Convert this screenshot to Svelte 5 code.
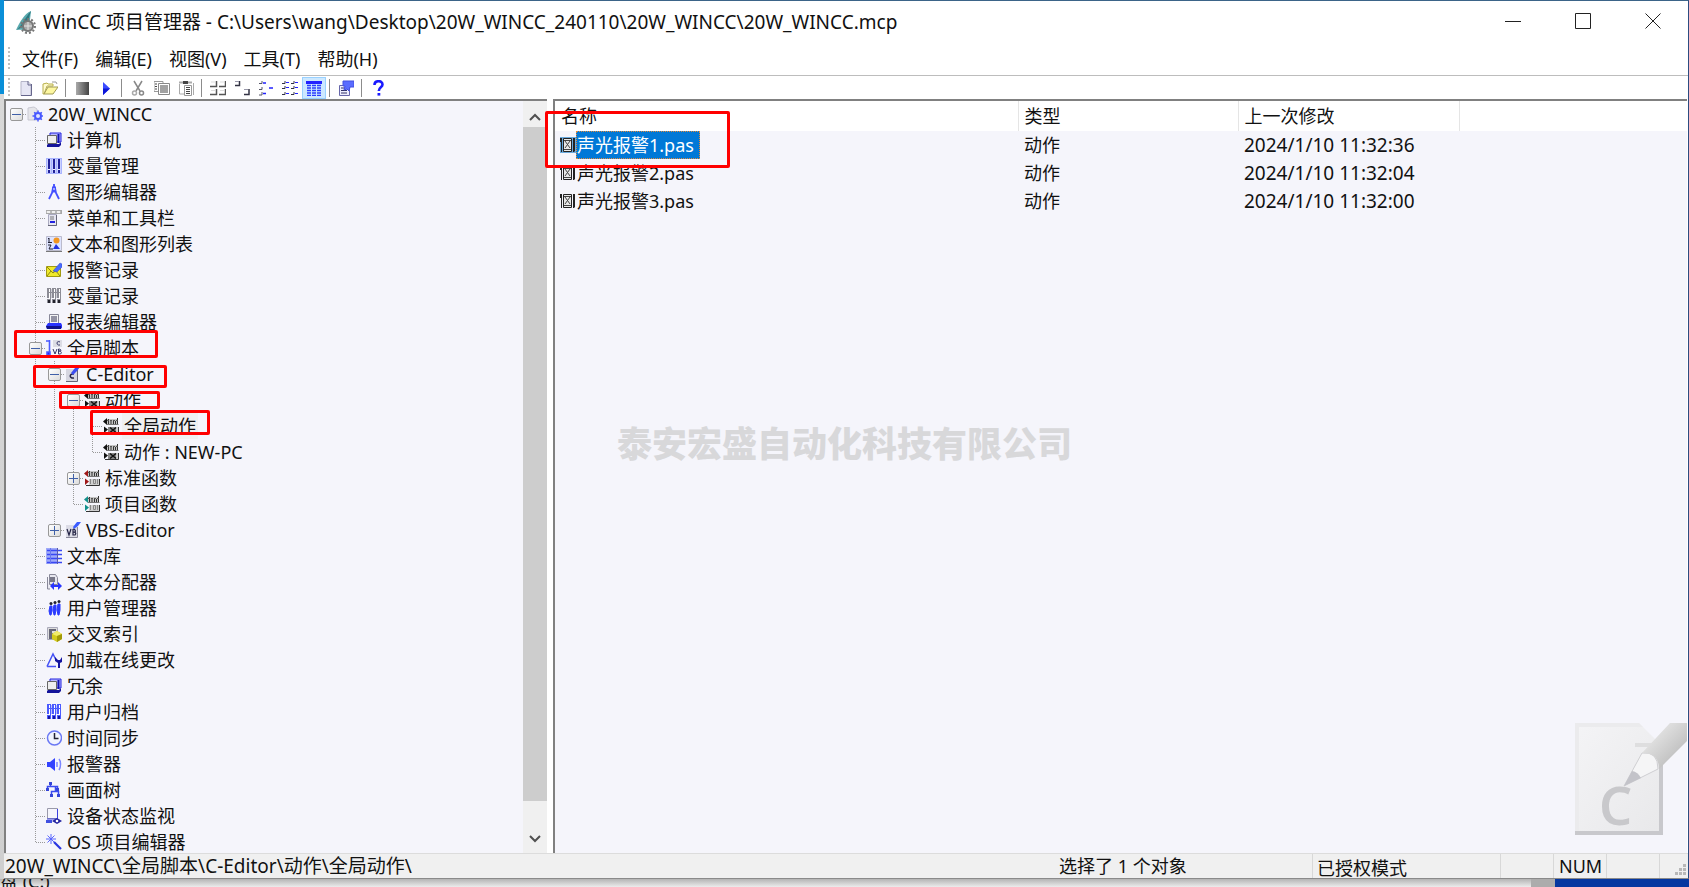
<script>
  const menus = ['文件(F)', '编辑(E)', '视图(V)', '工具(T)', '帮助(H)'];

  const toolbar = [
    ['new', '新建'],
    ['open', '打开'],
    null,
    ['stop', '停止'],
    ['play', '激活'],
    null,
    ['cut', '剪切'],
    ['copy', '复制'],
    ['paste', '粘贴'],
    null,
    ['large', '大图标'],
    ['small', '小图标'],
    ['list', '列表'],
    ['list2', '排列'],
    ['details', '详细信息'],
    null,
    ['props', '属性'],
    null,
    ['help', '帮助'],
  ];

  let tree = $state([
    {
      name: '20W_WINCC', icon: 'project', open: true, children: [
        { name: '计算机', icon: 'computer' },
        { name: '变量管理', icon: 'tags' },
        { name: '图形编辑器', icon: 'compass' },
        { name: '菜单和工具栏', icon: 'menu' },
        { name: '文本和图形列表', icon: 'textlist' },
        { name: '报警记录', icon: 'alarm' },
        { name: '变量记录', icon: 'taglog' },
        { name: '报表编辑器', icon: 'report' },
        {
          name: '全局脚本', icon: 'script', open: true, children: [
            {
              name: 'C-Editor', icon: 'ceditor', open: true, children: [
                {
                  name: '动作', icon: 'action', open: true, children: [
                    { name: '全局动作', icon: 'action', current: true },
                    { name: '动作 : NEW-PC', icon: 'action' },
                  ],
                },
                { name: '标准函数', icon: 'stdfunc', open: false, children: [] },
                { name: '项目函数', icon: 'prjfunc' },
              ],
            },
            { name: 'VBS-Editor', icon: 'vbs', open: false, children: [] },
          ],
        },
        { name: '文本库', icon: 'textlib' },
        { name: '文本分配器', icon: 'distributor' },
        { name: '用户管理器', icon: 'users' },
        { name: '交叉索引', icon: 'xref' },
        { name: '加载在线更改', icon: 'delta' },
        { name: '冗余', icon: 'computer' },
        { name: '用户归档', icon: 'archive' },
        { name: '时间同步', icon: 'clock' },
        { name: '报警器', icon: 'horn' },
        { name: '画面树', icon: 'pictree' },
        { name: '设备状态监视', icon: 'monitor' },
        { name: 'OS 项目编辑器', icon: 'wand' },
      ],
    },
  ]);

  const files = [
    { name: '声光报警1.pas', type: '动作', modified: '2024/1/10 11:32:36' },
    { name: '声光报警2.pas', type: '动作', modified: '2024/1/10 11:32:04' },
    { name: '声光报警3.pas', type: '动作', modified: '2024/1/10 11:32:00' },
  ];

  let selected = $state(0);

  // guides: for every ancestor level, whether its vertical line runs on below
  function flatten(nodes, guides = [], root = true) {
    return nodes.flatMap((node, i) => {
      const last = i === nodes.length - 1;
      const row = { node, guides, last, root };
      if (!node.children || !node.open) return [row];
      return [row, ...flatten(node.children, [...guides, !last], false)];
    });
  }

  let rows = $derived(flatten(tree));

  const func = (c, lower) => `
    <path d="M0 3.500L4 0v7z" fill="${c}"/><path d="M1 8.500l4 3-4 3.500z" fill="${c}"/>
    <path d="M4 1h11v6H4z" fill="#c4c4c4"/>
    <path d="M5.500 1v5M8 3v3M10.500 2v4M12.500 3v3M14.500 0v7" stroke="#333"/>
    <path d="M4 2.500h11" stroke="#555" stroke-dasharray="2 1"/>
    <path d="M4 6.500h11.500" stroke="#777"/>
    <path d="M5 9h10v6H5z" fill="#cfcfcf"/>${lower}
    <path d="M2 15.500h13.500V9" stroke="#333"/>`;

  const digits = `<path d="M6.500 9v5M9.500 9.500h2v4h-2zM13.500 9v5" stroke="#888"/>`;

  const pc = `
    <path d="M4 1h11v9H4z" fill="#b8b8ff" stroke="#2222e0"/>
    <path d="M1.500 3.500h9v8h-9z" fill="#eee" stroke="#666"/>
    <path d="M12.500 2v9" stroke="#1111b0" stroke-width="2"/>
    <path d="M1 13l1-1h11l2-2v3l-2 2H1z" fill="#14149a"/>`;

  const bars = (a, b) => `
    <path d="M1 1h14v9H1z" fill="${a}" opacity=".35"/>
    <path d="M2.500 0v10M7.500 0v10M12.500 0v10" stroke="${a}" stroke-width="3"/>
    <path d="M3.500 1v10M8.500 1v10M13.500 1v10" stroke="#fff"/>
    <path d="M4.500 0v11M9.500 0v11M14.500 0v11M1 4.500h14" stroke="${a}"/>
    <path d="M1 11h4v4H1zM6 11h4v4H6zM11 11h4v4h-4z" fill="${a}"/>
    <path d="M2 12h2v3H2zM7 12h2v3H7zM12 12h2v3h-2z" fill="${b}"/>`;

  const icons = {
    new: `<path d="M3 1.500h7l3 3v11H3z" fill="#e6e6f4" stroke="#b5b5c8"/><path d="M13.500 4v11.500H3M10 1v4h4" fill="none" stroke="#66668c"/>`,
    open: `<path d="M1 4l4-1 1 1h5v2H5l-3 8H1z" fill="#fffbd0" stroke="#b9b04a"/><path d="M2 14l4-7h10l-5 7z" fill="#fdf7a0" stroke="#a09a54"/><path d="M10 2h4l1 2" fill="none" stroke="#999"/>`,
    stop: `<defs><linearGradient id="sg"><stop stop-color="#aaa"/><stop offset="1" stop-color="#444"/></linearGradient></defs><path d="M2 2h13v13H2z" fill="url(#sg)"/>`,
    play: `<path d="M5 2l7 6.500L5 15z" fill="#3a4cff"/><path d="M5 8.500h7L5 15z" fill="#0c16d8"/>`,
    cut: `<path d="M4 1l6 10M12 1L6 11" stroke="#888" stroke-width="1.500"/><circle cx="4.500" cy="13" r="2" fill="none" stroke="#aaa" stroke-width="1.500"/><circle cx="11.500" cy="13" r="2" fill="none" stroke="#888" stroke-width="1.500"/>`,
    copy: `<path d="M0 1.500h9v10H0z" fill="#fff" stroke="#999"/><path d="M4.500 3.500h11v11h-11z" fill="#fff" stroke="#888"/><path d="M1 4h2M1 6.500h2M1 9h2M6 6h8M6 8h8M6 10h8M6 12h8" stroke="#444"/>`,
    paste: `<path d="M1 2.500h13" stroke="#aaa" stroke-width="2"/><path d="M5 1h5v3H5z" fill="#444"/><path d="M1.500 4v10H6M15.500 3v12" stroke="#aaa" fill="none"/><path d="M6.500 5.500h7v10h-7z" fill="#fff" stroke="#999"/><path d="M8 7.500h4M8 9.500h4M8 11.500h4M8 13.500h4" stroke="#444"/>`,
    large: `<path d="M0 6.500h6.500V1M9 6.500h6.500V1M0 14.500h6.500V9M9 14.500h6.500V9" fill="none" stroke="#555" stroke-width="1.500"/><path d="M1 2h4M10 2h4M1 10.500h4M10 10.500h4" stroke="#ddd"/>`,
    small: `<path d="M1 5.500h4.500V1M10 14.500h5V9" fill="none" stroke="#334" stroke-width="1.500"/><path d="M1 1.500h4M10 9.500h4" stroke="#99a"/>`,
    list: `<path d="M1 3.500h3V1M1 9.500h3V7M1 15h3v-3" fill="none" stroke="#556"/><path d="M5 3h3M11 8h4M5 13.500h3" stroke="#22f" stroke-width="1.500"/>`,
    list2: `<path d="M0 3.500h3V1M0 8.500h3V6M0 14.500h3V12M9 3.500h3V1M9 8.500h3V6M9 14.500h3V12" fill="none" stroke="#334"/><path d="M4 2.500h3M4 7.500h3M4 13.500h3M13 2.500h3M13 7.500h3M13 13.500h3" stroke="#22f"/>`,
    details: `<path d="M0 1h16v3H0z" fill="#22f"/><path d="M1 5.500h14M1 8h14M1 10.500h14M1 13h14M1 15.500h14" stroke="#2a3cff" stroke-width="1.500" stroke-dasharray="4 1"/>`,
    props: `<path d="M1.500 5.500h10v10h-10z" fill="#eef" stroke="#66a"/><path d="M3 8h6M3 10.500h6M3 13h6" stroke="#336"/><path d="M5 1h11v6h-4l-1 4-2-2-3 1 1-4H5z" fill="#5a6cff" stroke="#4450e0"/>`,
    help: `<path d="M4.500 5c0-5 8-5 8-.5C12.500 7.500 8.800 7 8.800 11" fill="none" stroke="#1a1aff" stroke-width="2.600"/><path d="M7.500 13h2.800v2.600H7.500z" fill="#1a1aff"/>`,
    project: `<path d="M1 2l6-1 3 2v11H1z" fill="#e6e6ea" stroke="#c8c8d2"/><circle cx="11" cy="10" r="3" fill="#dfe4ff" stroke="#4858ff" stroke-width="2"/><path d="M11 4.500v2M11 13.500v2M5.500 10h2M14.500 10h2M7.200 6.200l1.400 1.400M13.400 12.400l1.400 1.400M7.200 13.800l1.400-1.400M13.400 7.600l1.400-1.400" stroke="#4858ff" stroke-width="1.500"/>`,
    computer: pc,
    tags: `<path d="M0 0h16v16H0z" fill="#a9b4ff"/><path d="M3 1v14M8 1v14M13 1v14" stroke="#eef" stroke-width="3"/><path d="M3 1v10M8 1v10M13 1v10M3 12v3M8 12v3M13 12v3" stroke="#22229a" stroke-width="2"/>`,
    compass: `<path d="M8 0v3M7 4l-1 5-3 6M9 4l1 5 3 6" fill="none" stroke="#4450ff" stroke-width="1.800"/><path d="M6 3l2-2 2 2v4l-2 2-2-2z" fill="#4450ff"/><path d="M8 4v2" stroke="#fff"/>`,
    menu: `<path d="M0 0h16v4H0z" fill="#a8a8a8"/><path d="M1 1.500h3v1H1zM6 1.500h3v1H6zM11 1.500h3v1h-3z" fill="#efefef" stroke="#efefef"/><path d="M2.500 4.500h8v11h-8z" fill="#e6e6f2" stroke="#aaaac0"/><path d="M10.500 5v10.500H2" fill="none" stroke="#667"/><path d="M4 7h4M4 9h4" stroke="#777"/><path d="M4 11h5v2H4z" fill="#2222e0"/>`,
    textlist: `<path d="M.5.5h15v14H.500z" fill="#dde3ff" stroke="#bbc"/><path d="M3 2v4M2 2.500h1M2 6.500h4M2 9h3l-2 4h4" stroke="#223" fill="none"/><circle cx="10.500" cy="4.500" r="3" fill="#f2951f"/><path d="M7 13l3-5 4 5z" fill="#2233e0"/><path d="M0 15.500h16" stroke="#777"/>`,
    alarm: `<path d="M.5 4.500h14v10H.500z" fill="#f0ea2c" stroke="#a29a10"/><path d="M1 5l6 6 7-6M1 14l4-5M14 14l-4-5" stroke="#8c8610" fill="none"/><path d="M7 9l7-8 2 1v3l-5 5z" fill="#4a6cff" stroke="#3344c8" stroke-width=".5"/>`,
    taglog: bars('#8c8c96', '#22222c'),
    report: `<path d="M3.500.5h9v10h-9z" fill="#f4f4f4" stroke="#889"/><path d="M5 3h6M5 5h6M5 7h6" stroke="#335"/><path d="M2 9h13l1 2v3l-2 1H1l-1-3z" fill="#2a34ff"/><path d="M0 12h15v3H1z" fill="#10128c"/>`,
    script: `<path d="M3.500 0v12M1 12h3v3H1zM0 1h4" fill="#22f" stroke="#4a5aff" stroke-width="1.600"/><path d="M7 0h9v7H7z" fill="#dcdce4"/><path d="M14 2c-4-2-4 4 0 3M7 9l2 5 2-5M12.500 9v5h2c2-2 0-3-2-3h2c1-1 0-2-2-2" fill="none" stroke="#336"/>`,
    ceditor: `<path d="M1 3h11v12H1z" fill="#d6d6e0"/><path d="M12.500 4v11.500H1" fill="none" stroke="#667"/><path d="M9 8c-5-1-5 5 0 4" fill="none" stroke="#224" stroke-width="1.500"/><path d="M6 7l4-5 5-1-3 4-4 4z" fill="#3b4cf0"/>`,
    action: func('#111', `<path d="M5 9h8v6H5z" fill="#888"/><path d="M7 9.500l6 5M13 9.500l-6 5" stroke="#111" stroke-width="1.500"/>`),
    stdfunc: func('#a01818', digits),
    prjfunc: func('#12908c', digits),
    vbs: `<path d="M1 3h11v12H1z" fill="#dcdce6"/><path d="M12.500 5v10.500H1" fill="none" stroke="#889"/><path d="M2 7l2 6 2-6M8 7v6h2c2-2 0-3-2-3h2c1-1 0-3-2-3" fill="none" stroke="#224" stroke-width="1.200"/><path d="M8 5l4-5h4l-3 4-4 3z" fill="#3b5cff"/>`,
    textlib: `<path d="M0 0h12v16H0z" fill="#a0aaf8"/><path d="M1 2.500h15M1 6.500h15M1 10.500h15M1 14.500h15" stroke="#3948f4" stroke-width="1.500"/><path d="M11.500 0v16" stroke="#5a5aa8"/><path d="M4.500 0v16" stroke="#6a78f0"/>`,
    distributor: `<path d="M1.500 3v12H4M3.500.5h6l2 3v7h-8z" fill="#e6e6ee" stroke="#889"/><path d="M4 3h5v5H4z" fill="#778"/><path d="M4 12l4-4v3h4V8l4 4-4 4v-3H8v3z" fill="#2936ff"/>`,
    users: `<circle cx="5" cy="3.500" r="1.500" fill="#223"/><circle cx="9" cy="2.500" r="1.500" fill="#223"/><circle cx="13" cy="1.500" r="1.500" fill="#223"/><path d="M4 6h2v5l-1 4H4l-1-4zM8 5h2v5l-1 5H8l-1-5zM12 4h2v6l-1 5h-1l-1-5z" fill="#2a3aff" stroke="#2a3aff"/>`,
    xref: `<path d="M1.500 1.500h10v12h-10z" fill="#ddd" stroke="#aab"/><path d="M3 3h3v10H3zM3 3h7v2H3zM3 7h5v1H3z" fill="#667"/><path d="M6 8l5-3 5 3v5l-5 3-5-3z" fill="#d4cb1c"/><path d="M6 8l5 2 5-2-5-3z" fill="#f1ec6a"/><path d="M11 10v6l5-3V8z" fill="#a19908"/>`,
    delta: `<path d="M1 14.500L7 2l3 6M1 14.500h9" fill="none" stroke="#4552f5" stroke-width="1.500"/><path d="M9 5v4l3 2v5h2v-5l2-1V5l-2 3h-2z" fill="#1414a0"/>`,
    archive: bars('#4a5aff', '#1515a0'),
    clock: `<circle cx="8.500" cy="8" r="7" fill="#f2f5ff" stroke="#6a78f4" stroke-width="1.500"/><path d="M8.500 3v5.500h4" fill="none" stroke="#223" stroke-width="1.500"/>`,
    horn: `<path d="M1 6h3l5-4v13l-5-4H1z" fill="#3242ff"/><path d="M11 6v5M13 3c2 2 2 8 0 11" fill="none" stroke="#7a86ff" stroke-width="1.500"/>`,
    pictree: `<path d="M4.500 1v3M1.500 8V4.500h10V8M9.500 5v4M5.500 14V9.500h7V14" fill="none" stroke="#3a4af0" stroke-width="1.500"/><path d="M3 0h3v3H3zM0 6h3v3H0zM10 6h3v3h-3zM4 12h3v3H4zM11 12h3v3h-3z" fill="#3444d8"/>`,
    monitor: `<path d="M1.500.5h10v10h-10z" fill="#f5f5fc" stroke="#99a"/><path d="M11.500 1v10H1" fill="none" stroke="#3a40e0"/><path d="M0 12h6v3H0z" fill="#4050e0"/><path d="M6 13l5-3 5 3-5 3z" fill="#2222a0"/><circle cx="11" cy="13" r="1.300" fill="#fff"/>`,
    wand: `<path d="M5 0v10M0 5h10M1.500 1.500l7 7M8.500 1.500l-7 7" stroke="#5966ff"/><path d="M8 8l7 7" stroke="#2a36e0" stroke-width="2.200"/>`,
    file: `<path d="M0 1h2v14H1V5H0zM13 1h2v13l-1 1h-1z" fill="#222"/><path d="M3.500 1.500h8v13h-8z" fill="#e8e8e8" stroke="#222"/><path d="M5 4l5 7M10 4l-5 7M4 12.500h7M4 3.500h7" stroke="#444"/>`,
  };
</script>

{#snippet icon(name)}
  <svg class="icon" viewBox="0 0 16 16" aria-hidden="true">{@html icons[name]}</svg>
{/snippet}

<div class="desktop">
  <div class="behind-left"></div>
  <div class="window">
    <header class="titlebar">
      <svg class="logo" viewBox="0 0 22 24" aria-hidden="true">
        <path d="M1 20C5 12 9 4 16 1c-1 8-1 14-4 21-4-3-8-2-11-2z" fill="#5aa9ae" />
        <path d="M2 20C7 15 10 8 16 1c-2 6-3 10-4 13z" fill="#2c7880" />
        <circle cx="13" cy="16" r="5" fill="#aaa" stroke="#777" stroke-width="2" />
        <circle cx="13" cy="16" r="7" fill="none" stroke="#777" stroke-width="2" stroke-dasharray="2 2" />
        <path d="M13 12v8M9 16h8" stroke="#e4e4e4" />
      </svg>
      <h1>WinCC 项目管理器 - C:\Users\wang\Desktop\20W_WINCC_240110\20W_WINCC\20W_WINCC.mcp</h1>
      <button class="caption" aria-label="最小化">
        <svg viewBox="0 0 16 16"><path d="M0 8.500h16" /></svg>
      </button>
      <button class="caption" aria-label="最大化">
        <svg viewBox="0 0 16 16"><path d="M.5.500h15v15H.500z" /></svg>
      </button>
      <button class="caption" aria-label="关闭">
        <svg viewBox="0 0 16 16"><path d="M.5.500l15 15M15.500.500l-15 15" /></svg>
      </button>
    </header>

    <nav class="menubar">
      <span class="grip"></span>
      {#each menus as menu}
        <button>{menu}</button>
      {/each}
    </nav>

    <div class="toolbar" role="toolbar" aria-label="工具栏">
      <span class="grip"></span>
      {#each toolbar as item}
        {#if item}
          <button class:pressed={item[0] === 'details'} aria-label={item[1]}>{@render icon(item[0])}</button>
        {:else}
          <span class="sep"></span>
        {/if}
      {/each}
    </div>

    <main class="panes">
      <section class="tree-pane">
        <ul class="tree" role="tree">
          {#each rows as { node, guides, last, root }}
            <li role="treeitem" aria-selected={!!node.current}>
              {#each guides.slice(1) as more}
                <span class="cell" class:through={more}></span>
              {/each}
              <span class="cell stub" class:tee={!root && !last} class:end={!root && last}>
                {#if node.children}
                  <button
                    class="toggle"
                    aria-label={node.open ? '折叠' : '展开'}
                    onclick={() => (node.open = !node.open)}
                  >
                    <svg viewBox="0 0 11 11">
                      <path d={node.open ? 'M1 5.500h9' : 'M1 5.500h9M5.500 1v9'} />
                    </svg>
                  </button>
                {/if}
              </span>
              <span class="shim"></span>
              {@render icon(node.icon)}
              <span class="label" class:current={node.current}>{node.name}</span>
            </li>
          {/each}
        </ul>
        <div class="scrollbar">
          <button aria-label="向上滚动"><svg viewBox="0 0 12 8"><path d="M1 7l5-5 5 5" /></svg></button>
          <div class="thumb"></div>
          <button aria-label="向下滚动"><svg viewBox="0 0 12 8"><path d="M1 1l5 5 5-5" /></svg></button>
        </div>
      </section>

      <section class="list-pane">
        <table>
          <thead>
            <tr>
              <th class="name">名称</th>
              <th class="type">类型</th>
              <th class="date">上一次修改</th>
              <th></th>
            </tr>
          </thead>
          <tbody>
            {#each files as file, i}
              <tr class:selected={selected === i} onclick={() => (selected = i)}>
                <td class="name">
                  <div class="file">{@render icon('file')}<span>{file.name}</span></div>
                </td>
                <td>{file.type}</td>
                <td class="modified">{file.modified}</td>
                <td></td>
              </tr>
            {/each}
          </tbody>
        </table>
        <svg class="backdrop" viewBox="0 0 112 112" aria-hidden="true">
          <defs>
            <linearGradient id="sheet" x2="1" y2="1">
              <stop stop-color="#f4f4f6" />
              <stop offset="1" stop-color="#e8e8ea" />
            </linearGradient>
            <linearGradient id="body" x1=".2" y1=".2" x2=".8" y2=".8">
              <stop stop-color="#e6e6e6" />
              <stop offset="1" stop-color="#bdbdbd" />
            </linearGradient>
          </defs>
          <path d="M0 0h64l24 24v88H0z" fill="url(#sheet)" />
          <path d="M0 0h64l4 4H4v104H0z" fill="#ebebed" />
          <path d="M60 20h20v4H60z" fill="#dededf" />
          <path d="M0 108h84V40h4v72H0z" fill="#c8c8cc" />
          <text x="24" y="102">C</text>
          <path d="M49 63l18-33q16-2 16 16z" fill="#f5f5f6" stroke="#cfcfd2" />
          <path d="M49 63l8-15q6 1 9 7z" fill="#c3c3c9" />
          <path d="M67 30L95 0h17v18L84 46q0-16-17-16z" fill="url(#body)" />
        </svg>
      </section>
    </main>

    <footer class="status">
      <span class="path">20W_WINCC\全局脚本\C-Editor\动作\全局动作\</span>
      <span class="count">选择了 1 个对象</span>
      <span class="licence">已授权模式</span>
      <span class="slot"></span>
      <span class="slot">NUM</span>
      <span class="slot"></span>
      <span class="slot size">
        <svg viewBox="0 0 12 12" aria-hidden="true">
          <path d="M8 0h3v3H8zM4 4h3v3H4zM8 4h3v3H8zM0 8h3v3H0zM4 8h3v3H4zM8 8h3v3H8z" fill="#b8b8b8" />
        </svg>
      </span>
    </footer>
  </div>
  <div class="behind-bottom"><span class="drive">盘 (C:)</span><span class="gray"></span><span class="blue"></span></div>

  <div class="watermark">泰安宏盛自动化科技有限公司</div>

  <div class="mark script"></div>
  <div class="mark ceditor"></div>
  <div class="mark action"></div>
  <div class="mark global"></div>
  <div class="mark file-row"></div>
</div>

<style>
  :global(body) {
    margin: 0;
    background: #fff;
  }

  .desktop {
    position: relative;
    display: grid;
    grid-template-columns: 4px 1fr;
    grid-template-rows: 1fr 8px;
    height: 100vh;
    overflow: hidden;
    font-family: "Noto Sans", "Noto Sans CJK SC", sans-serif;
    font-size: 18px;
    line-height: 26px;
    color: #111;
  }

  button {
    padding: 0;
    border: none;
    background: none;
    font: inherit;
    color: inherit;
  }

  .icon {
    flex: none;
    display: block;
    width: 16px;
    height: 16px;
    fill: none;
  }

  .behind-left {
    background: linear-gradient(#0a8fd8 94px, #d8d8d8 94px, #cfcfcf);
  }

  .behind-bottom {
    grid-column: 1 / -1;
    display: flex;
    overflow: hidden;
    background: linear-gradient(#b4b4b4, #ececec);
  }
  .drive {
    flex: 1;
    line-height: 4px;
  }
  .gray {
    width: 24px;
    background: #acacac;
  }
  .blue {
    width: 134px;
    background: #0537a0;
  }

  .window {
    display: flex;
    flex-direction: column;
    min-height: 0;
    min-width: 0;
    border-top: 1px solid #3b6488;
    border-right: 1px solid #2c4c80;
    border-bottom: 1px solid #8a8a8a;
    background: #fff;
  }

  /* title bar */
  .titlebar {
    flex: none;
    display: flex;
    align-items: center;
    height: 42px;
    padding-left: 11px;
  }
  .logo {
    width: 22px;
    height: 24px;
    margin-right: 6px;
  }
  h1 {
    flex: 1;
    margin: 0;
    font-size: 19px;
    font-weight: 400;
    white-space: nowrap;
  }
  .caption {
    width: 70px;
    height: 42px;
  }
  .caption svg {
    width: 16px;
    height: 16px;
    fill: none;
    stroke: #222;
  }

  /* menu and toolbar */
  .menubar {
    flex: none;
    display: flex;
    align-items: center;
    height: 32px;
    border-bottom: 1px solid #bdbdbd;
  }
  .menubar button {
    padding: 0 9px 0 8px;
    line-height: 28px;
    white-space: nowrap;
  }
  .grip {
    width: 2px;
    height: 24px;
    margin: 0 4px;
    background: repeating-linear-gradient(#c0c0c0 0 2px, transparent 2px 4px);
  }
  .toolbar {
    flex: none;
    display: flex;
    align-items: center;
    height: 23px;
  }
  .toolbar .grip {
    height: 20px;
  }
  .toolbar button {
    display: flex;
    align-items: center;
    justify-content: center;
    width: 24px;
    height: 22px;
  }
  .toolbar .pressed {
    background: #cce8ff;
    box-shadow: inset 0 0 0 1px #99d1ff;
  }
  .sep {
    width: 1px;
    height: 18px;
    margin: 0 4px 0 3px;
    background: #8c8c8c;
  }

  /* panes */
  .panes {
    flex: 1;
    display: grid;
    grid-template-columns: 543px 1fr;
    gap: 6px;
    min-height: 0;
  }
  .tree-pane,
  .list-pane {
    min-width: 0;
    min-height: 0;
    overflow: hidden;
    border: 2px solid #808080;
    border-right: none;
    border-bottom: none;
    background: #f5f5fb;
  }
  .tree-pane {
    display: flex;
  }
  .list-pane {
    display: flex;
    flex-direction: column;
    justify-content: space-between;
    margin-right: 1px;
  }

  .tree {
    flex: 1;
    min-width: 0;
    margin: 0;
    padding: 0;
    overflow: hidden;
    list-style: none;
  }
  .tree li {
    display: flex;
    align-items: center;
    height: 26px;
    padding-left: 1px;
    white-space: nowrap;
  }
  .cell {
    --v: repeating-linear-gradient(#999 0 1px, transparent 1px 2px);
    --h: repeating-linear-gradient(90deg, #999 0 1px, transparent 1px 2px);
    flex: none;
    display: flex;
    align-items: center;
    justify-content: center;
    width: 19px;
    height: 26px;
    background-repeat: no-repeat;
  }
  .through {
    background-image: var(--v);
    background-position: 9px 0;
    background-size: 1px 26px;
  }
  .stub {
    background-image: var(--h);
    background-position: 10px 13px;
    background-size: 9px 1px;
  }
  .tee,
  .end {
    background-image: var(--h), var(--v);
    background-position: 10px 13px, 9px 0;
    background-size: 9px 1px, 1px 26px;
  }
  .end {
    background-size: 9px 1px, 1px 13px;
  }
  /* children hang under the middle of their parent's icon */
  .tree li:not(:first-child) {
    padding-left: 20px;
  }
  .toggle {
    display: flex;
    width: 13px;
    height: 13px;
    box-sizing: border-box;
    border: 1px solid #989898;
    border-radius: 2px;
    background: linear-gradient(135deg, #fff, #dcdcdc);
  }
  .toggle svg {
    width: 11px;
    height: 11px;
    stroke: #4060a8;
  }
  .shim {
    width: 1px;
  }
  .label {
    margin-left: 3px;
    padding: 0 2px;
  }
  .current {
    background: #f0f0f0;
  }

  .scrollbar {
    display: flex;
    flex-direction: column;
    width: 24px;
    padding-bottom: 4px;
    background: #f0f0f0;
  }
  .scrollbar button {
    height: 26px;
    line-height: 20px;
  }
  .scrollbar svg {
    width: 12px;
    height: 8px;
    fill: none;
    stroke: #505050;
    stroke-width: 2;
  }
  .thumb {
    flex: 1;
    margin-bottom: 22px;
    background: #cdcdcd;
  }

  /* file list */
  table {
    width: 100%;
    table-layout: fixed;
    border-collapse: collapse;
  }
  th,
  td {
    box-sizing: border-box;
    height: 28px;
    padding: 0 6px;
    text-align: left;
    font-weight: 400;
    white-space: nowrap;
  }
  th {
    height: 30px;
    border-right: 1px solid #e5e5e5;
    background: #fff;
  }
  th:last-child {
    border-right: none;
  }
  th.name {
    width: 463px;
  }
  th.type {
    width: 220px;
  }
  th.date {
    width: 221px;
  }
  td.name {
    padding-left: 5px;
  }
  .modified {
    font-size: 19px;
  }
  .file {
    display: flex;
    align-items: center;
  }
  .file span {
    padding: 0 5px 0 0;
    border: 1px solid transparent;
    line-height: 26px;
  }
  .selected .file span {
    border: 1px dotted #e08a3c;
    background: #0078d7;
    color: #fff;
  }
  .selected .icon {
    background: #6aa9dc;
  }
  .backdrop {
    align-self: flex-end;
    width: 112px;
    height: 112px;
    margin-bottom: 18px;
  }
  .backdrop text {
    font-size: 52px;
    font-weight: 600;
    fill: #c8c8cb;
  }

  /* status bar */
  .status {
    flex: none;
    display: flex;
    height: 24px;
    border-top: 1px solid #dcdcdc;
    background: #f0f0f0;
    line-height: 24px;
    white-space: nowrap;
  }
  .status span {
    box-sizing: border-box;
    border-right: 1px solid #d8d8d8;
  }
  .status .path {
    flex: 1;
    padding-left: 1px;
    border: none;
    font-size: 19px;
  }
  .count {
    width: 258px;
    padding-left: 4px;
  }
  .licence {
    width: 188px;
    padding-left: 4px;
    line-height: 28px;
  }
  .slot {
    width: 53px;
    padding-left: 5px;
  }
  .status .size {
    display: flex;
    align-items: flex-end;
    justify-content: flex-end;
    width: 28px;
    padding: 0 1px 2px 0;
    border: none;
  }
  .size svg {
    width: 12px;
    height: 12px;
  }

  /* overlays */
  .watermark {
    position: absolute;
    inset: 0;
    display: flex;
    align-items: center;
    justify-content: center;
    font-size: 35px;
    font-weight: 900;
    color: #d8d8da;
    pointer-events: none;
  }
  .mark {
    position: absolute;
    box-sizing: border-box;
    border: 3px solid #f00;
    border-radius: 2px;
    pointer-events: none;
  }
  .mark.script {
    left: 14px;
    top: 330px;
    width: 144px;
    height: 28px;
  }
  .mark.ceditor {
    left: 33px;
    top: 365px;
    width: 134px;
    height: 23px;
  }
  .mark.action {
    left: 59px;
    top: 391px;
    width: 101px;
    height: 18px;
  }
  .mark.global {
    left: 90px;
    top: 410px;
    width: 120px;
    height: 25px;
  }
  .mark.file-row {
    left: 545px;
    top: 111px;
    width: 185px;
    height: 57px;
  }
</style>
